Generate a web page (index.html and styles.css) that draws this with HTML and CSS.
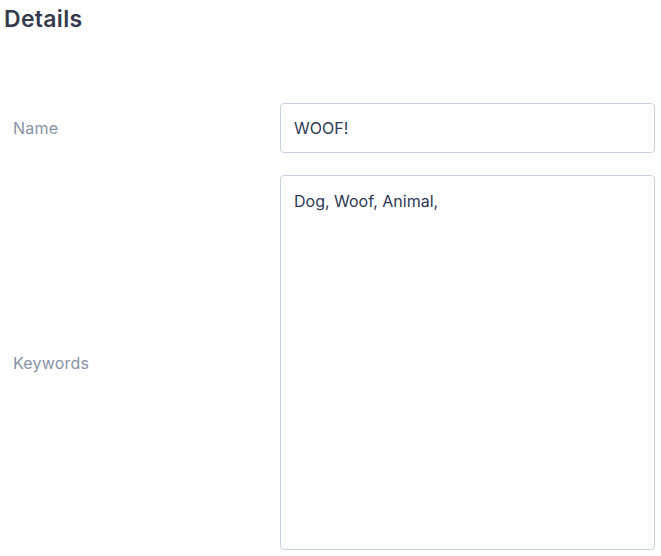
FILE: index.html
```html
<!DOCTYPE html>
<html>
<head>
<meta charset="UTF-8">
<title>Details</title>
<link rel="stylesheet" href="styles.css">
</head>
<body>
<h2 class="title">Details</h2>
<form class="details">
	<div class="row row-name">
		<label class="label" for="name">Name</label>
		<input class="field" id="name" type="text" value="WOOF!">
	</div>
	<div class="row row-keywords">
		<label class="label" for="keywords">Keywords</label>
		<textarea class="field area" id="keywords">Dog, Woof, Animal,</textarea>
	</div>
</form>
</body>
</html>
```

FILE: styles.css
```css
body{
	margin : 0;
	padding : 0 6px 0 4px;
	font-family : "Inter", "Noto Sans", sans-serif;
	background-color : #ffffff;
}

.title{
	margin : 3px 0 0 0;
	font-size : 23px;
	font-weight : 600;
	letter-spacing : 0.3px;
	color : #333b4d;
	line-height : 32px;
}

.details{
	margin-top : 68px;
}

.row{
	display : grid;
	grid-template-columns : 276px 1fr;
	align-items : center;
	margin-bottom : 22px;
}

.label{
	padding-left : 9px;
	font-size : 16px;
	letter-spacing : 0.2px;
	color : #8792a6;
}

.field{
	box-sizing : border-box;
	width : 100%;
	height : 50px;
	padding : 0 13px;
	border : 1px solid #c9d3e0;
	border-radius : 4px;
	font-family : inherit;
	font-size : 16px;
	color : #2e3a55;
	outline : none;
}

.area{
	height : 375px;
	padding-top : 14px;
	resize : none;
	line-height : 22px;
}
```
